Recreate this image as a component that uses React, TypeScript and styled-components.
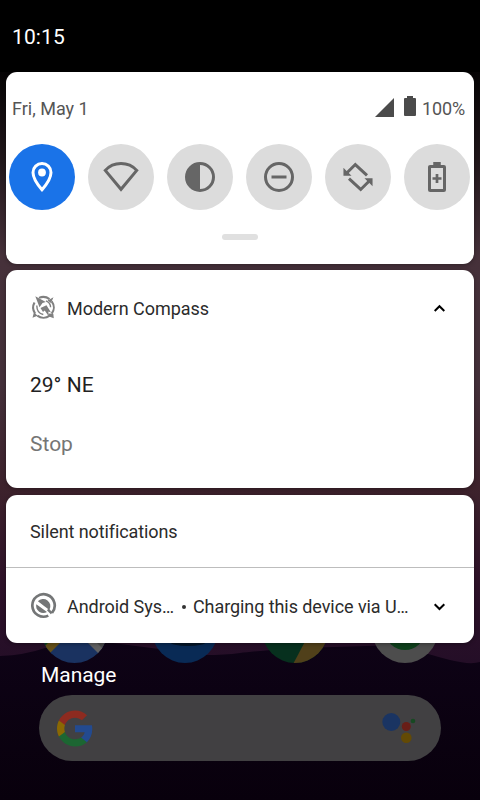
import React from "react";
import styled, { createGlobalStyle } from "styled-components";

const Global = createGlobalStyle`
  *{box-sizing:border-box}
  body{margin:0;background:#000;font-family:Roboto,"Noto Sans",sans-serif}
  svg{display:block;flex:none}
`;

const Screen = styled.main`
  position: relative;
  width: 480px;
  height: 800px;
  overflow: hidden;
  display: flex;
  flex-direction: column;
`;
const Wallpaper = styled.svg`
  position: absolute;
  inset: 0;
  z-index: -1;
`;
const StatusBar = styled.header`
  height: 72px;
  padding: 1px 12px 0;
  display: flex;
  align-items: center;
  background: #000;
`;
const Text = styled.span<{ $size?: number; $color?: string; $spacing?: number }>`
  font-size: ${(p) => p.$size ?? 18}px;
  color: ${(p) => p.$color ?? "#2b2b2b"};
  letter-spacing: ${(p) => p.$spacing ?? 0}px;
  line-height: 24px;
  white-space: nowrap;
`;
const Card = styled.section<{ $height: number; $gap?: number }>`
  height: ${(p) => p.$height}px;
  margin: 0 6px ${(p) => p.$gap ?? 0}px;
  flex: none;
  border-radius: 11px;
  background: #fff;
  overflow: hidden;
  box-shadow: 0 1px 4px #0005;
`;
const InfoRow = styled.div`
  display: flex;
  align-items: center;
  justify-content: space-between;
  height: 24px;
  margin: 25px 9px 23px 6px;
`;
const BatteryInfo = styled.div`
  display: flex;
  align-items: center;
`;
const SignalSlot = styled.div`
  margin-right: 10px;
  padding-bottom: 3px;
`;
const BatterySlot = styled.div`
  margin-right: 6px;
  padding-bottom: 6px;
`;
const Tiles = styled.div`
  display: flex;
  gap: 13px;
  padding-left: 3px;
`;
const Tile = styled.button<{ $on?: boolean }>`
  width: 66px;
  height: 66px;
  flex: none;
  padding: 0;
  border: 0;
  border-radius: 50%;
  display: grid;
  place-items: center;
  background: ${(p) => (p.$on ? "#1a73e8" : "#dcdcdc")};
  color: ${(p) => (p.$on ? "#fff" : "#666")};
`;
const Handle = styled.div`
  width: 36px;
  height: 6px;
  margin: 24px auto 0;
  border-radius: 3px;
  background: #e0e0e0;
`;
const NotificationHeader = styled.div<{ $height: number }>`
  height: ${(p) => p.$height}px;
  display: flex;
  align-items: center;
  padding: 0 24px;
`;
const AppIcon = styled.div`
  width: 27px;
  margin-right: 10px;
  padding-bottom: 2px;
`;
const Chevron = styled.div`
  margin-left: auto;
  width: 21px;
`;
const Body = styled.div`
  display: flex;
  flex-direction: column;
  gap: 35px;
  padding: 26px 24px 0;
`;
const SectionTitle = styled.div`
  height: 73px;
  padding: 1px 24px 0;
  display: flex;
  align-items: center;
  border-bottom: 1px solid #bdbdbd;
`;
const Bullet = styled.i`
  width: 4px;
  height: 4px;
  border-radius: 50%;
  background: #333;
  margin: 0 7px 0 8px;
`;
const Manage = styled.div`
  margin: 20px 0 0 41px;
  height: 32px;
`;
const SearchBar = styled.div`
  width: 402px;
  height: 66px;
  flex: none;
  margin-left: 39px;
  padding: 0 25px 0 18px;
  display: flex;
  align-items: center;
  justify-content: space-between;
  border-radius: 33px;
  background: #414042;
`;

const icon = { width: 36, height: 36, viewBox: "0 0 24 24", fill: "none", stroke: "currentColor", strokeWidth: 2 };

const LocationIcon = () => (
  <svg {...icon}>
    <path d="M12 3a6 6 0 0 0-6 6c0 3.9 4.1 9.3 6 11.500 1.900-2.200 6-7.600 6-11.500a6 6 0 0 0-6-6z" />
    <circle cx="12" cy="9" r="2.6" fill="currentColor" stroke="none" />
  </svg>
);
const WifiIcon = () => (
  <svg {...icon}>
    <path d="M1.500 7.600C4.300 4.500 8 3 12 3s7.700 1.500 10.500 4.600L12 20.200z" />
  </svg>
);
const ContrastIcon = () => (
  <svg {...icon}>
    <circle cx="12" cy="12" r="9" />
    <path d="M12 3a9 9 0 0 0 0 18z" fill="currentColor" stroke="none" />
  </svg>
);
const DndIcon = () => (
  <svg {...icon}>
    <circle cx="12" cy="12" r="9" />
    <path d="M7 12h10" />
  </svg>
);
const RotateIcon = () => (
  <svg {...icon}>
    <path d="M18 10.900 10.200 3.700 4.500 9.300M6 13.100l7.800 7.200 5.700-5.600" />
    <path d="M2.300 5.800v5.400h5.400L5.300 8.800 4.400 8zM21.700 18.200v-5.400h-5.400l2.400 2.400.9.800z" fill="currentColor" stroke="none" />
  </svg>
);
const SaverIcon = () => (
  <svg {...icon}>
    <rect x="7" y="5" width="10" height="16" rx=".4" />
    <path d="M9.500 2h5v3h-5z" fill="currentColor" stroke="none" />
    <path d="M12 10v6M9 13h6" strokeWidth="1.800" />
  </svg>
);
const SignalIcon = () => (
  <svg width="19" height="19" viewBox="0 0 19 19"><path d="M0 19 19 0v19z" fill="#4b4b4b" /></svg>
);
const BatteryIcon = () => (
  <svg width="12" height="20" viewBox="0 0 12 20"><path d="M3 2V0h6v2h2q1 0 1 1v16q0 1-1 1H1q-1 0-1-1V3q0-1 1-1z" fill="#4b4b4b" /></svg>
);
const CompassIcon = () => (
  <svg width="27" height="27" viewBox="0 0 27 27" fill="none" stroke="#808080">
    <path d="M9 3.900a10.300 10.300 0 0 1 10.500 1.200M21.700 7.300a10.300 10.300 0 0 1 0 12.400M19.700 21.700a10.300 10.300 0 0 1-12.400 0M5.100 19.500A10.300 10.300 0 0 1 4.500 8.500" strokeWidth="2.100" />
    <path d="M5.300 2.200 15.800 8l-3.300 1.100-3 4.200zM10.500 14l6-2.800 4.500 7.300-2.500-.9-.3 4-3.500-5.100-1.700 1.400zM17.500 6.500 23.500 3.300 21 9zM18.500 19.500l4.800.2.500 4.600-5.500-2zM2.500 23.800 4 18l3.500 3.700z" fill="#808080" stroke="none" />
    <path d="M6.800 11.500c0 5 2.200 8.200 6.500 9M16 6.800c3 1.200 4.600 3.300 4.600 6.500" strokeWidth="1.400" />
  </svg>
);
const SystemIcon = () => (
  <svg width="27" height="27" viewBox="0 0 27 27" fill="none" stroke="#747677">
    <path d="M22 20.800a11.200 11.200 0 1 0-3.700 2.800" strokeWidth="2.700" />
    <path d="M7.800 9.200A7.300 7.300 0 0 1 19.400 17.900z" fill="#747677" stroke="none" />
    <path d="M6.300 12.300 17 20A7.200 7.200 0 0 1 6.300 12.300z" fill="#747677" stroke="none" />
    <path d="m7.200 9.700 12.300 11" stroke="#fff" strokeWidth="1.200" />
    <path d="m17.800 17.300 3.900 4" strokeWidth="2.400" />
  </svg>
);
const Arrow = ({ up }: { up?: boolean }) => (
  <svg width="21" height="14" viewBox="0 0 21 14" fill="none" stroke="#000" strokeWidth="2">
    <path d={up ? "M5.700 9l4.800-4.800L15.300 9" : "M5.700 4.200l4.800 4.800 4.800-4.800"} />
  </svg>
);
const GoogleIcon = () => (
  <svg width="36" height="37" viewBox="1 1 22 22">
    <path fill="#234a8f" d="M22.560 12.250c0-.78-.07-1.530-.2-2.250H12v4.260h5.920c-.26 1.370-1.040 2.530-2.210 3.310v2.770h3.570c2.080-1.920 3.280-4.740 3.280-8.090z" />
    <path fill="#1c6632" d="M12 23c2.970 0 5.460-.98 7.280-2.660l-3.570-2.770c-.98.66-2.230 1.060-3.710 1.060-2.860 0-5.290-1.930-6.160-4.530H2.180v2.840C3.990 20.530 7.700 23 12 23z" />
    <path fill="#8a6803" d="M5.840 14.090c-.22-.66-.35-1.360-.35-2.090s.13-1.430.35-2.090V7.070H2.180C1.430 8.550 1 10.220 1 12s.43 3.450 1.180 4.930z" />
    <path fill="#8d2b20" d="M12 5.380c1.620 0 3.060.56 4.210 1.640l3.150-3.150C17.450 2.090 14.970 1 12 1 7.700 1 3.990 3.470 2.180 7.070l3.660 2.840c.87-2.600 3.300-4.530 6.160-4.530z" />
  </svg>
);
const AssistantIcon = () => (
  <svg width="34" height="34" viewBox="0 0 34 34">
    <circle cx="9.300" cy="11" r="9" fill="#1a3462" />
    <circle cx="24.300" cy="15.500" r="4.500" fill="#681e17" />
    <circle cx="24.300" cy="26.800" r="5.300" fill="#634a05" />
    <circle cx="31" cy="10" r="2.300" fill="#174922" />
  </svg>
);

const Backdrop = () => (
  <Wallpaper width="480" height="800" viewBox="0 0 480 800">
    <defs>
      <linearGradient id="sky" x2="0" y2="1">
        <stop offset=".09" stopColor="#060405" />
        <stop offset=".2" stopColor="#21171b" />
        <stop offset=".32" stopColor="#46313a" />
        <stop offset=".48" stopColor="#44303a" />
        <stop offset=".61" stopColor="#3d222c" />
        <stop offset=".73" stopColor="#2e1229" />
        <stop offset=".83" stopColor="#240e27" />
      </linearGradient>
      <linearGradient id="ground" x2="0" y2="1">
        <stop stopColor="#0e0316" />
        <stop offset="1" stopColor="#08000c" />
      </linearGradient>
      <clipPath id="mapClip"><circle cx="74.500" cy="630" r="33" /></clipPath>
      <clipPath id="chromeClip"><circle cx="295" cy="630" r="33" /></clipPath>
    </defs>
    <path fill="url(#sky)" d="M0 0h480v800H0z" />
    <path fill="url(#ground)" d="M0 656Q25 655 45 648L90 640L205 655Q225 655 240 653T300 648L400 645Q430 655 450 660T480 662V800H0z" />
    <g clipPath="url(#mapClip)">
      <path fill="#1a3260" d="M40 597h70v70H40z" />
      <path fill="#0d4420" d="M40 597h30v35L40 660z" />
      <path fill="#655017" d="m45 658 26-26-6-6-26 26z" />
      <path fill="#4b4b4b" d="M80 630h40v40z" />
      <path fill="#606060" d="m81 636 24 24 5-4-24-24z" />
    </g>
    <circle cx="185" cy="630" r="33" fill="#092a55" />
    <ellipse cx="188" cy="642" rx="18" ry="4" fill="#041427" />
    <g clipPath="url(#chromeClip)">
      <path fill="#07301e" d="M260 597h70v70h-70z" />
      <path fill="#50401a" d="m309 634-18 34h41v-34z" />
    </g>
    <circle cx="405" cy="630" r="33" fill="#4d4d4d" />
    <circle cx="405" cy="630" r="20" fill="#0e401c" />
  </Wallpaper>
);

export default function App() {
  return (
    <Screen>
      <Global />
      <Backdrop />
      <StatusBar><Text $size={21} $color="#fff" $spacing={0.1}>10:15</Text></StatusBar>
      <Card $height={192} $gap={6}>
        <InfoRow>
          <Text $color="#555">Fri, May 1</Text>
          <BatteryInfo>
            <SignalSlot><SignalIcon /></SignalSlot>
            <BatterySlot><BatteryIcon /></BatterySlot>
            <Text $color="#555" $spacing={-0.15}>100%</Text>
          </BatteryInfo>
        </InfoRow>
        <Tiles>
          <Tile $on><LocationIcon /></Tile>
          <Tile><WifiIcon /></Tile>
          <Tile><ContrastIcon /></Tile>
          <Tile><DndIcon /></Tile>
          <Tile><RotateIcon /></Tile>
          <Tile><SaverIcon /></Tile>
        </Tiles>
        <Handle />
      </Card>
      <Card $height={218} $gap={7}>
        <NotificationHeader $height={77}>
          <AppIcon><CompassIcon /></AppIcon>
          <Text $spacing={-0.03}>Modern Compass</Text>
          <Chevron><Arrow up /></Chevron>
        </NotificationHeader>
        <Body>
          <Text $size={21} $color="#212121">29° NE</Text>
          <Text $size={21} $color="#757575">Stop</Text>
        </Body>
      </Card>
      <Card $height={148}>
        <SectionTitle><Text $spacing={-0.09}>Silent notifications</Text></SectionTitle>
        <NotificationHeader $height={77}>
          <AppIcon><SystemIcon /></AppIcon>
          <Text $spacing={-0.05}>Android Sys…</Text>
          <Bullet />
          <Text $spacing={-0.07}>Charging this device via U…</Text>
          <Chevron><Arrow /></Chevron>
        </NotificationHeader>
      </Card>
      <Manage><Text $size={21} $color="#fff" $spacing={-0.05}>Manage</Text></Manage>
      <SearchBar><GoogleIcon /><AssistantIcon /></SearchBar>
    </Screen>
  );
}
